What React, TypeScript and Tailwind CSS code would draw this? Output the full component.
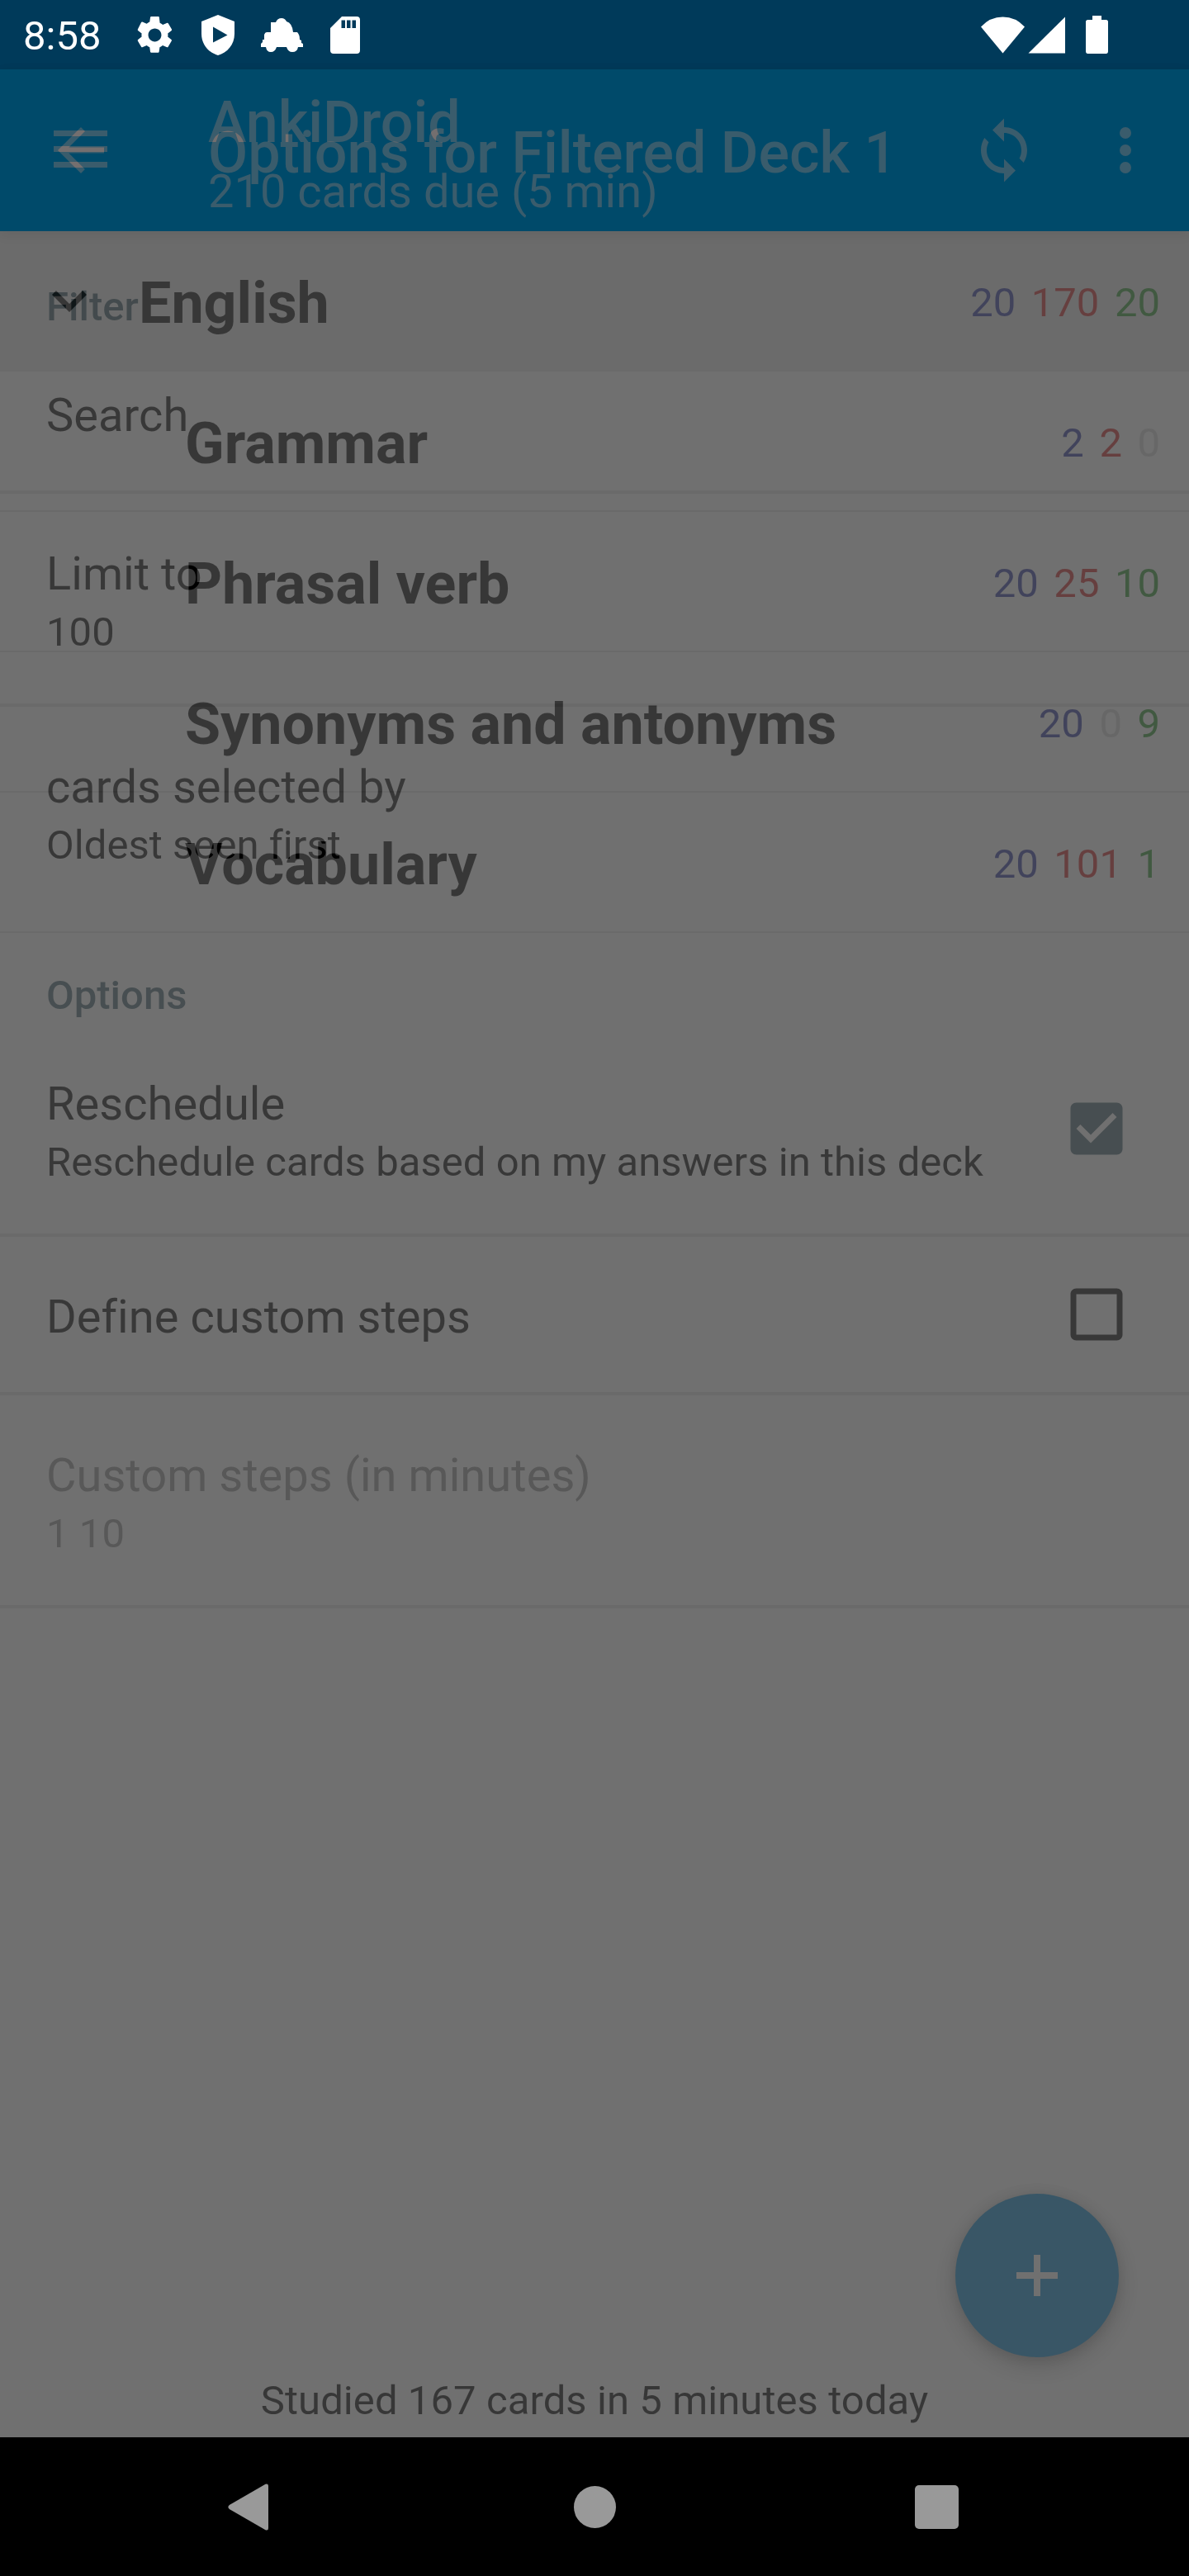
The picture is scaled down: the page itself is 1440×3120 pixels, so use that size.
import type { ReactNode } from "react";

const BAR_TINT = "#746f6f";

function StatusBar() {
  return (
    <header className="flex h-[84px] items-center bg-[#003a5a] pl-[28px] text-white">
      <span className="w-[124px] pt-[4px] text-[49px] leading-[60px]">8:58</span>
      <svg className="ml-[9px] size-[53px]" viewBox="0 0 24 24" fill="white">
        <path d="M19.14 12.94c.04-.3.06-.61.06-.94 0-.32-.02-.64-.07-.94l2.03-1.58c.18-.14.23-.41.12-.61l-1.92-3.32c-.12-.22-.37-.29-.59-.22l-2.39.96c-.5-.38-1.03-.7-1.62-.94L14.4 2.2c-.04-.2-.2-.35-.4-.35h-4c-.24 0-.43.17-.47.41l-.36 2.54c-.59.24-1.13.57-1.62.94l-2.39-.96c-.22-.08-.47 0-.59.22L2.65 8.87c-.12.21-.08.47.12.61l2.03 1.58c-.05.3-.07.62-.07.94s.02.64.07.94l-2.03 1.58c-.18.14-.23.41-.12.61l1.92 3.32c.12.22.37.29.59.22l2.39-.96c.5.38 1.03.7 1.62.94l.36 2.54c.05.24.24.41.48.41h3.84c.24 0 .44-.17.47-.41l.36-2.54c.59-.24 1.13-.56 1.62-.94l2.39.96c.22.08.47 0 .59-.22l1.92-3.32c.12-.22.07-.47-.12-.61l-2.01-1.58zM12 15.6c-1.98 0-3.6-1.62-3.6-3.6s1.62-3.6 3.6-3.6 3.6 1.62 3.6 3.6-1.62 3.6-3.6 3.6z" />
      </svg>
      <svg className="ml-[30px] h-[49px] w-[40px]" viewBox="0 0 40 49" fill="white" fillRule="evenodd">
        <path d="M20 0L40 8V23C40 36 31 46 20 49C9 46 0 36 0 23V8ZM14 14.500V33.500L31.500 24.500Z" />
      </svg>
      <svg className="ml-[32px] h-[41px] w-[51px]" viewBox="0 0 51 41" fill="white">
        <path d="M12 5H18Q20 0 25 0Q29 0 31 4Q38 6 39 17H44Q47 20 47 26L49 27V30L51 31V35H45Q44 41 38 41Q33 41 31 35H19Q17 41 12 41Q7 41 6 35H0V31L2 29V26H4V20Q5 17 7 17H12Z" />
      </svg>
      <svg className="ml-[33px] h-[45px] w-[36px]" viewBox="0 0 36 45" fill="white" fillRule="evenodd">
        <path d="M14 0H32Q36 0 36 4V41Q36 45 32 45H4Q0 45 0 41V14ZM13.500 4.500V14H18V4.500ZM20 4.500V14H24.500V4.500ZM26.500 4.500V14H31V4.500Z" />
      </svg>
      <svg className="ml-auto h-[45px] w-[53px]" viewBox="0 0 53 45" fill="white">
        <path d="M0 12.500Q11 .5 26.500 .5Q42 .5 53 12.500L26.500 44.500Z" />
      </svg>
      <svg className="ml-[4px] size-[45px]" viewBox="0 0 45 45" fill="white">
        <path d="M45 .5V44.500H.5Z" />
      </svg>
      <svg className="mr-[98px] ml-[25px] h-[46px] w-[27px]" viewBox="0 0 27 46" fill="white">
        <path d="M8 0H19V5H24.500Q27 5 27 7.500V43Q27 46 24.500 46H2.500Q0 46 0 43V7.500Q0 5 2.500 5H8Z" />
      </svg>
    </header>
  );
}

function AppBar({ children }: { children: ReactNode }) {
  return (
    <div className="relative flex h-[196px] shrink-0 items-start bg-[#004a6a] text-[#746f6f] shadow-[0_4px_14px_rgba(0,0,0,0.07)]">
      {children}
    </div>
  );
}

function Category({ title }: { title: string }) {
  return (
    <h2 className="h-[126px] pt-[59px] pl-[56px] text-[49px] leading-[65px] font-medium text-[#1f2d32]">
      {title}
    </h2>
  );
}

type PreferenceProps = {
  title: string;
  summary?: string;
  disabled?: boolean;
  divider?: boolean;
  tall?: boolean;
  checked?: boolean;
};

function Preference({ title, summary, disabled, divider = true, tall, checked }: PreferenceProps) {
  return (
    <div
      className={`flex justify-between border-b-4 pr-[70px] pl-[56px] ${tall ? "h-[258px]" : "h-[192px]"} ${
        divider ? "border-[#646464]" : "border-transparent"
      } ${disabled ? "text-[#404040]" : "text-black"}`}
    >
      <div className="pt-[60px] tracking-[0.05px]">
        <div className="text-[56px] leading-[75px]">{title}</div>
        {summary && <div className="text-[49px] leading-[65px]">{summary}</div>}
      </div>
      {checked !== undefined && (
        <svg
          className={`size-[84px] self-center ${checked ? "text-[#1f2d32]" : "text-black"}`}
          viewBox="0 0 24 24"
          fill="currentColor"
        >
          {checked ? (
            <path d="M19 3H5c-1.110 0-2 .9-2 2v14c0 1.100.89 2 2 2h14c1.110 0 2-.9 2-2V5c0-1.100-.89-2-2-2zm-9 14l-5-5 1.410-1.410L10 14.170l7.590-7.590L19 8l-9 9z" />
          ) : (
            <path d="M19 5v14H5V5h14m0-2H5c-1.100 0-2 .9-2 2v14c0 1.100.9 2 2 2h14c1.100 0 2-.9 2-2V5c0-1.100-.9-2-2-2z" />
          )}
        </svg>
      )}
    </div>
  );
}

function FilteredDeckOptions() {
  return (
    <section className="flex flex-col bg-[#707070] [grid-area:1/1]">
      <AppBar>
        <svg className="mt-[56px] ml-[56px] size-[84px]" viewBox="0 0 24 24" fill={BAR_TINT}>
          <path d="M20 11H7.830l5.590-5.590L12 4l-8 8 8 8 1.410-1.410L7.830 13H20v-2z" />
        </svg>
        <h1 className="mt-[60px] ml-[112px] text-[70px] leading-[82px] font-medium whitespace-nowrap">
          Options for Filtered Deck 1
        </h1>
      </AppBar>
      <Category title="Filter" />
      <Preference title="Search" />
      <Preference title="Limit to" summary="100" tall />
      <Preference title="cards selected by" summary="Oldest seen first" tall divider={false} />
      <Category title="Options" />
      <Preference
        title="Reschedule"
        summary="Reschedule cards based on my answers in this deck"
        tall
        checked
      />
      <Preference title="Define custom steps" checked={false} />
      <Preference title="Custom steps (in minutes)" summary="1 10" tall disabled />
    </section>
  );
}

const decks = [
  { name: "English", fresh: 20, learn: 170, due: 20, parent: true },
  { name: "Grammar", fresh: 2, learn: 2, due: 0 },
  { name: "Phrasal verb", fresh: 20, learn: 25, due: 10 },
  { name: "Synonyms and antonyms", fresh: 20, learn: 0, due: 9 },
  { name: "Vocabulary", fresh: 20, learn: 101, due: 1 },
];

function DeckPicker() {
  return (
    <section className="flex flex-col bg-[#707070] opacity-50 [grid-area:1/1]">
      <AppBar>
        <svg className="mt-[74px] ml-[65px] h-[45px] w-[65px]" viewBox="0 0 65 45" fill={BAR_TINT}>
          <path d="M0 0H65V7H0ZM0 19H65V26H0ZM0 38H65V45H0Z" />
        </svg>
        <div className="ml-[122px] pt-[23px]">
          <h1 className="text-[70px] leading-[82px] font-medium">AnkiDroid</h1>
          <p className="mt-[10px] text-[56px] leading-[66px]">210 cards due (5 min)</p>
        </div>
        <svg className="mt-[56px] ml-auto size-[84px]" viewBox="0 0 24 24" fill={BAR_TINT}>
          <path d="M12 4V1L8 5l4 4V6c3.310 0 6 2.690 6 6 0 1.010-.25 1.970-.7 2.800l1.460 1.460C19.540 15.030 20 13.570 20 12c0-4.420-3.580-8-8-8zm0 14c-3.310 0-6-2.690-6-6 0-1.010.25-1.970.7-2.800L5.240 7.740C4.460 8.970 4 10.430 4 12c0 4.420 3.580 8 8 8v3l4-4-4-4v3z" />
        </svg>
        <svg className="mt-[56px] mr-[35px] ml-[63px] size-[84px]" viewBox="0 0 24 24" fill={BAR_TINT}>
          <circle cx="12" cy="6" r="2" />
          <circle cx="12" cy="12" r="2" />
          <circle cx="12" cy="18" r="2" />
        </svg>
      </AppBar>
      {decks.map((d) => (
        <div
          key={d.name}
          className={`flex h-[170px] items-center border-b-2 border-[#666666] pt-[5px] pr-[35px] ${
            d.parent ? "bg-[#686868] pl-[42px]" : "pl-[224px]"
          }`}
        >
          {d.parent && (
            <svg className="mr-[42px] mb-[6px] size-[84px]" viewBox="0 0 24 24" fill="black">
              <path d="M7.410 8.590L12 13.170l4.590-4.580L18 10l-6 6-6-6z" />
            </svg>
          )}
          <span className="text-[70px] leading-[82px] font-bold text-black">{d.name}</span>
          <div className="ml-auto flex gap-[18.5px] text-[49px] leading-[58px]">
            <span className="text-[#141848]">{d.fresh}</span>
            <span className={d.learn ? "text-[#5e1010]" : "text-[#606060]"}>{d.learn}</span>
            <span className={d.due ? "text-[#144414]" : "text-[#606060]"}>{d.due}</span>
          </div>
        </div>
      ))}
      <button className="mt-auto mr-[85px] flex size-[198px] items-center justify-center self-end rounded-full bg-[#043e5e] shadow-[0_10px_22px_rgba(0,0,0,0.3),0_0_14px_rgba(0,0,0,0.15)]">
        <svg className="size-[50px]" viewBox="0 0 50 50" fill="#707070">
          <path d="M21 0H29V21H50V29H29V50H21V29H0V21H21Z" />
        </svg>
      </button>
      <p className="mt-[24px] mb-[15px] text-center text-[49px] leading-[58px] tracking-[0.08px] text-black">
        Studied 167 cards in 5 minutes today
      </p>
    </section>
  );
}

function NavigationBar() {
  return (
    <nav className="flex h-[168px] items-center bg-black pl-[276px]">
      <svg className="h-[57px] w-[49px]" viewBox="0 0 49 57" fill="#999999">
        <path d="M45.500 .8Q49 -.5 49 3V54Q49 57.500 45.500 56.200L1.800 31Q-1 28.500 1.800 26Z" />
      </svg>
      <div className="ml-[370px] size-[51px] rounded-full bg-[#999999]" />
      <div className="ml-[362px] size-[53px] rounded-[5px] bg-[#999999]" />
    </nav>
  );
}

export default function App() {
  return (
    <div className="flex h-[3120px] w-[1440px] flex-col overflow-hidden bg-black font-['Roboto',sans-serif]">
      <StatusBar />
      <main className="grid flex-1">
        <FilteredDeckOptions />
        <DeckPicker />
      </main>
      <NavigationBar />
    </div>
  );
}
